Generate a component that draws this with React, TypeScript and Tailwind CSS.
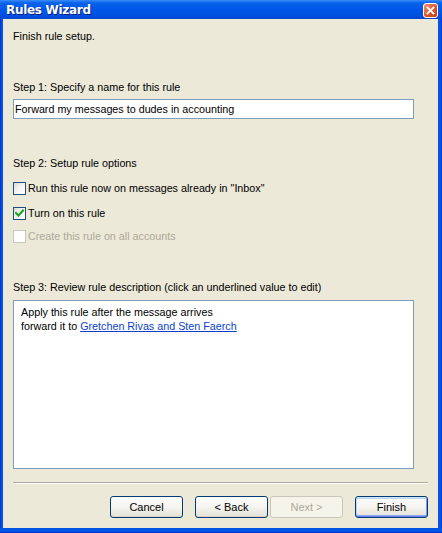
import React from "react";

const font = { fontFamily: '"Liberation Sans", Arial, sans-serif' };

function CheckBox({ checked, disabled }: { checked?: boolean; disabled?: boolean }) {
  return (
    <div
      className={
        "w-[13px] h-[13px] shrink-0 border flex items-center justify-center " +
        (disabled
          ? "border-[#cac8bb] bg-white"
          : "border-[#1c5180] bg-gradient-to-br from-[#dcdcd7] via-[#f4f4f1] to-white")
      }
    >
      {checked && (
        <svg width="9" height="9" viewBox="0 0 9 9">
          <path d="M1 4 L3.5 6.5 L8 1.5" stroke="#21a121" strokeWidth="2" fill="none" strokeLinecap="square" />
        </svg>
      )}
    </div>
  );
}

function Button({ label, disabled, isDefault }: { label: string; disabled?: boolean; isDefault?: boolean }) {
  return (
    <div
      className={
        "w-[73px] h-[22px] rounded-[3px] border flex items-center justify-center text-[11px] " +
        (disabled
          ? "border-[#c9c7ba] bg-[#f5f4ea] text-[#aca899]"
          : "border-[#003c74] bg-gradient-to-b from-white via-[#f5f4ef] to-[#e3e1d6] text-black " +
            (isDefault
              ? "shadow-[inset_0_1px_0_#cee7ff,inset_0_-1px_0_#6982ee,inset_1px_0_0_#b9d1fc,inset_-1px_0_0_#7d99f0,inset_0_2px_0_#bcd4f6,inset_0_-2px_0_#8aa7f2]"
              : "shadow-[inset_0_-1px_0_#d6d0c5]"))
      }
    >
      {label}
    </div>
  );
}

function CloseIcon() {
  return (
    <svg width="15" height="15" viewBox="0 0 15 15" className="mt-[1px]">
      <defs>
        <linearGradient id="cg" x1="0" y1="0" x2="1" y2="1">
          <stop offset="0" stopColor="#f39a7c" />
          <stop offset="0.5" stopColor="#e05a33" />
          <stop offset="1" stopColor="#c0390f" />
        </linearGradient>
      </defs>
      <rect x="0.5" y="0.5" width="14" height="14" rx="2.5" fill="url(#cg)" stroke="#ffffff" strokeWidth="1" />
      <path d="M4.5 4.5 L10.5 10.5 M10.5 4.5 L4.5 10.5" stroke="white" strokeWidth="1.8" strokeLinecap="square" />
    </svg>
  );
}

export default function App() {
  return (
    <div className="w-[442px] h-[533px] flex flex-col overflow-hidden" style={font}>
      {/* Title bar */}
      <div className="h-[19px] shrink-0 flex items-center justify-between pl-[6px] pr-[4px] bg-[linear-gradient(to_bottom,#3a8cf9_0%,#0a63ec_15%,#0058e8_45%,#0052e2_75%,#0046d2_100%)]">
        <span
          className="text-white font-bold text-[12px] leading-none"
          style={{ textShadow: "1px 1px 0 #0a1e84", fontFamily: '"DejaVu Sans", "Liberation Sans", sans-serif', letterSpacing: "-0.3px" }}
        >
          Rules Wizard
        </span>
        <CloseIcon />
      </div>

      {/* Body with side borders */}
      <div className="flex-1 flex">
        <div className="w-[3px] bg-[#0055e5] border-l border-[#0831d9]" />
        <div className="flex-1 bg-[#ece9d8] flex flex-col pl-[10px] pr-[10px] text-[10.75px] text-black">
          <div className="mt-[11px] h-[13px] leading-[13px]">Finish rule setup.</div>

          <div className="mt-[38px] h-[13px] leading-[13px]">Step 1: Specify a name for this rule</div>
          <div className="mt-[5px] w-[401px] h-[20px] border border-[#7f9db9] bg-white flex items-center pl-[1px] leading-[13px]">
            Forward my messages to dudes in accounting
          </div>

          <div className="mt-[38px] h-[13px] leading-[13px]">Step 2: Setup rule options</div>
          <div className="mt-[12px] h-[13px] flex items-center gap-[2px] leading-[13px]">
            <CheckBox />
            <span>Run this rule now on messages already in "Inbox"</span>
          </div>
          <div className="mt-[12px] h-[13px] flex items-center gap-[2px] leading-[13px]">
            <CheckBox checked />
            <span>Turn on this rule</span>
          </div>
          <div className="mt-[10px] h-[13px] flex items-center gap-[2px] leading-[13px]">
            <CheckBox disabled />
            <span className="text-[#aca899]">Create this rule on all accounts</span>
          </div>

          <div className="mt-[38px] h-[13px] leading-[13px]">
            Step 3: Review rule description (click an underlined value to edit)
          </div>
          <div className="mt-[6px] w-[401px] h-[169px] border border-[#7f9db9] bg-white pl-[7px] pt-[4px] leading-[14px]">
            <div>Apply this rule after the message arrives</div>
            <div>
              forward it to <span className="text-[#0b3fcb] underline">Gretchen Rivas and Sten Faerch</span>
            </div>
          </div>

          <div className="mt-[13px] h-[2px] border-t border-[#aca899] border-b border-b-white" />

          <div className="mt-[12px] flex justify-end items-center">
            <Button label="Cancel" />
            <div className="w-[12px]" />
            <Button label="< Back" />
            <div className="w-[2px]" />
            <Button label="Next >" disabled />
            <div className="w-[12px]" />
            <Button label="Finish" isDefault />
          </div>
        </div>
        <div className="w-[4px] bg-[#0055e5] border-r border-[#0831d9]" />
      </div>
      <div className="h-[5px] shrink-0 bg-[#0055e5] border-b border-[#0831d9]" />
    </div>
  );
}
